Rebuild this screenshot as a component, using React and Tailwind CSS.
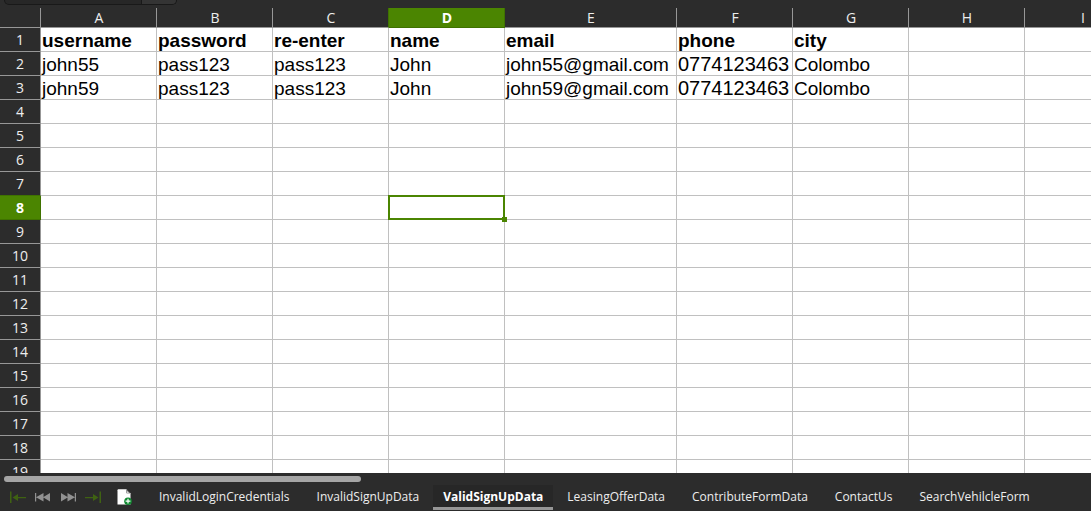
const columns = ['A', 'B', 'C', 'D', 'E', 'F', 'G', 'H', 'I'];
const records = [
  ['username', 'password', 're-enter', 'name', 'email', 'phone', 'city', '', ''],
  ['john55', 'pass123', 'pass123', 'John', 'john55@gmail.com', '0774123463', 'Colombo', '', ''],
  ['john59', 'pass123', 'pass123', 'John', 'john59@gmail.com', '0774123463', 'Colombo', '', ''],
];
const rows = Array.from({ length: 19 }, (_, i) => i + 1);
const sheets = [
  'InvalidLoginCredentials',
  'InvalidSignUpData',
  'ValidSignUpData',
  'LeasingOfferData',
  'ContributeFormData',
  'ContactUs',
  'SearchVehilcleForm',
];
const activeColumn = 3;
const activeRow = 8;
const activeSheet = 2;

function columnHeadStyle(i) {
  if (i === activeColumn) return 'bg-[#4b8501] border-r-[#3f7200] border-b-[#3f7200] font-bold text-white';
  if (i === activeColumn - 1) return 'border-r-[#3f7200] border-b-[#979797] font-normal';
  return 'border-r-[#979797] border-b-[#979797] font-normal';
}

function rowHeadStyle(n) {
  if (n === activeRow) return 'bg-[#4b8501] border-r-[#3f7200] border-b-[#3f7200] font-bold text-white';
  if (n === activeRow - 1) return 'border-r-[#979797] border-b-[#3f7200] font-normal';
  return 'border-r-[#979797] border-b-[#979797] font-normal';
}

function cellTextStyle(value) {
  if (/^\d+$/.test(value)) return 'text-xl leading-[21px]';
  return 'text-[19px] leading-[21px]';
}

function NameBox() {
  return (
    <div className="h-2 pl-1">
      <div className="flex h-[5px] w-[173px] overflow-hidden rounded-b-md border-x border-b border-[#191919] bg-[#272727]">
        <div className="flex-1 border-r border-[#191919]" />
        <div className="w-[34px] bg-[#343434]" />
      </div>
    </div>
  );
}

function Grid() {
  return (
    <table className="w-full min-w-[1141px] table-fixed border-separate border-spacing-0">
      <colgroup>
        <col className="w-[41px]" />
        {columns.map((c) => (
          <col key={c} className={c === 'E' ? 'w-[172px]' : 'w-[116px]'} />
        ))}
      </colgroup>
      <thead>
        <tr className="h-5 text-sm leading-[19px] text-[#eeeeee]">
          <td className="border-r border-b border-[#979797] p-0" />
          {columns.map((c, i) => (
            <th key={c} scope="col" className={`border-r border-b py-0 pr-0 pl-px text-center ${columnHeadStyle(i)}`}>
              {c}
            </th>
          ))}
        </tr>
      </thead>
      <tbody>
        {rows.map((n) => (
          <tr key={n} className="h-6">
            <th
              scope="row"
              className={`border-r border-b p-0 text-center text-sm leading-[23px] text-[#eeeeee] ${rowHeadStyle(n)}`}
            >
              {n}
            </th>
            {columns.map((c, i) => (
              <td
                key={c}
                className={`relative border-r border-b border-[#c0c0c0] bg-white pt-0.5 pr-0 pb-0 pl-px font-['Liberation_Sans',Arial,sans-serif] whitespace-nowrap text-black ${cellTextStyle(records[n - 1]?.[i] ?? '')} ${n === 1 ? 'font-bold' : ''}`}
              >
                {records[n - 1]?.[i]}
                {n === activeRow && i === activeColumn && (
                  <div className="absolute -inset-px z-10 border-2 border-[#4b8501]">
                    <div className="absolute -right-1 -bottom-1 size-[5px] bg-[#4b8501]" />
                  </div>
                )}
              </td>
            ))}
          </tr>
        ))}
      </tbody>
    </table>
  );
}

function NavButton({ label, className, children }) {
  return (
    <button type="button" aria-label={label} className={`flex size-6 items-center justify-center ${className}`}>
      <svg width="16" height="12" viewBox="0 0 16 12" fill="currentColor" aria-hidden="true">
        {children}
      </svg>
    </button>
  );
}

function SheetNav() {
  return (
    <div className="flex h-6 items-center gap-px pl-1.5">
      <NavButton label="First sheet" className="text-[#3f6212]">
        <path d="M0 0.500h1.500v11.500H0zM2.500 6.500l5.500-3.500v3h8v1.200H8v2.800z" />
      </NavButton>
      <NavButton label="Previous sheet" className="text-[#919191]">
        <path d="M0 2h1.200v8.500H0zM8.500 2v8.500L1 6.250zM15 2v8.500L8 6.250z" />
      </NavButton>
      <NavButton label="Next sheet" className="text-[#919191]">
        <path d="M16 2h-1.200v8.500H16zM7.500 2v8.500L15 6.250zM1 2v8.500L8 6.250z" />
      </NavButton>
      <NavButton label="Last sheet" className="text-[#3f6212]">
        <path d="M16 0.500h-1.500v11.500H16zM13.500 6.500L8 3v3H0v1.200h8v2.800z" />
      </NavButton>
      <button type="button" aria-label="Add sheet" className="ml-[9px] flex size-5 items-center justify-center">
        <svg width="16" height="16" viewBox="0 0 16 16" aria-hidden="true">
          <path d="M0.500 1.200Q0.500 0.300 1.400 0.300H9.500L13.500 4.300V15.500H0.500z" fill="#fff" />
          <path d="M9.500 0.300v4h4z" fill="#2c2c2c" />
          <path d="M9.900 1.400v2.500h2.500z" fill="#d8d8d8" />
          <circle cx="11" cy="12.200" r="3.800" fill="#128a32" />
          <path d="M10.400 9.800h1.200v1.800h1.800v1.200h-1.800v1.800h-1.200v-1.800H8.600v-1.200h1.800z" fill="#fff" />
        </svg>
      </button>
    </div>
  );
}

export default function App() {
  return (
    <div className="flex h-screen flex-col overflow-hidden bg-[#2c2c2c] font-['Open_Sans','Noto_Sans',sans-serif]">
      <NameBox />
      <main className="min-h-0 flex-1 overflow-hidden">
        <Grid />
      </main>
      <footer className="pt-[3px]">
        <div className="px-1">
          <div className="h-1.5 w-[33%] rounded-sm bg-[#a5a5a5]" />
        </div>
        <div className="flex pt-[3px] pb-px">
          <SheetNav />
          <div role="tablist" aria-label="Sheets" className="ml-[11px] flex gap-px">
            {sheets.map((name, i) => (
              <button
                key={name}
                type="button"
                role="tab"
                aria-selected={i === activeSheet}
                className={`h-[25px] border-b-3 pt-0.5 text-xs leading-5 whitespace-nowrap ${
                  i === activeSheet
                    ? 'border-[#969696] bg-[#272727] px-2.5 font-bold text-white'
                    : 'border-transparent px-[13px] text-[#eeeeee]'
                }`}
              >
                {name}
              </button>
            ))}
          </div>
        </div>
      </footer>
    </div>
  );
}
